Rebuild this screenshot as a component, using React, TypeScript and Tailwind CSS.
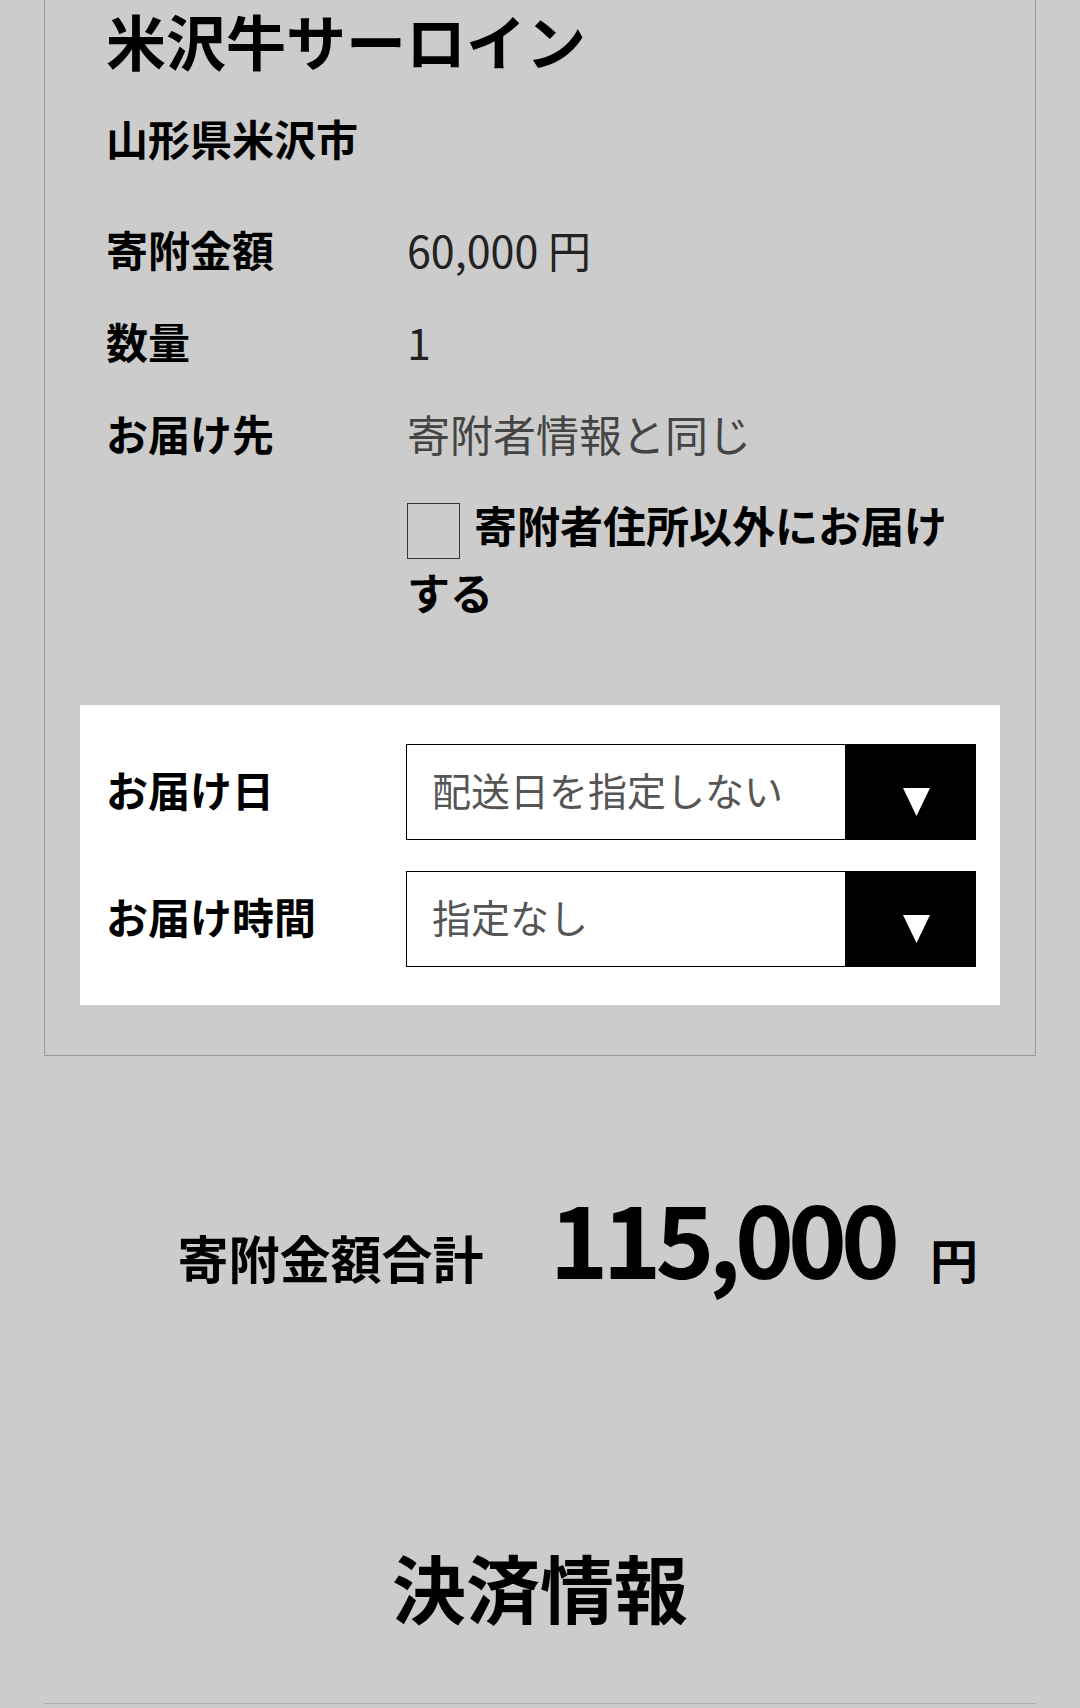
import React from "react";

const font = "font-['Noto_Sans_CJK_JP','Noto_Sans',sans-serif]";

function Select({ text }: { text: string }) {
  return (
    <div className="flex h-[96px] w-[570px]">
      <div className="flex flex-1 items-center border border-black bg-white pb-[6px] pl-[25px] text-[39px] leading-none text-[#555]">
        {text}
      </div>
      <div className="flex w-[130px] items-center justify-center bg-black">
        <svg width="27" height="28" viewBox="0 0 27 28" className="mt-[20px] ml-[10px]">
          <polygon points="0,0 27,0 13.5,28" fill="#fff" />
        </svg>
      </div>
    </div>
  );
}

export default function App() {
  return (
    <div className={`min-h-screen bg-[#cccccc] ${font} text-black`}>
      <div className="mx-[44px] border-x border-b border-[#999] px-[35px] pb-[50px]">
        <div className="pl-[26px] pr-[24px]">
          <div className="flex h-[80px] items-center text-[60px] font-bold leading-none">米沢牛サーロイン</div>
          <div className="mt-[30px] flex h-[56px] items-center text-[42px] font-bold leading-none">山形県米沢市</div>
          <div className="mt-[37px] grid grid-cols-[301px_1fr]">
            <div className="flex h-[92px] items-center text-[42px] font-bold leading-none">寄附金額</div>
            <div className="flex h-[92px] items-center text-[43px] leading-none text-[#222]">60,000 円</div>
            <div className="flex h-[92px] items-center text-[42px] font-bold leading-none">数量</div>
            <div className="flex h-[92px] items-center text-[43px] leading-none text-[#222]">1</div>
            <div className="flex h-[92px] items-center text-[42px] font-bold leading-none">お届け先</div>
            <div className="flex h-[92px] items-center text-[43px] leading-none text-[#444]">寄附者情報と同じ</div>
          </div>
          <div className="mt-[13px] grid grid-cols-[301px_1fr]">
            <div />
            <div className="text-[43px] font-bold leading-[65px]">
              <span className="mr-[14px] inline-block h-[56px] w-[53px] border border-[#333] align-middle" />
              寄附者住所以外にお届け
              <br />
              する
            </div>
          </div>
        </div>
        <div className="mt-[81px] bg-white pt-[39px] pb-[38px] pl-[26px] pr-[24px]">
          <div className="grid grid-cols-[300px_1fr] items-center gap-y-[31px]">
            <div className="pb-[6px] text-[42px] font-bold leading-none">お届け日</div>
            <Select text="配送日を指定しない" />
            <div className="pb-[6px] text-[42px] font-bold leading-none">お届け時間</div>
            <Select text="指定なし" />
          </div>
        </div>
      </div>

      <div className="mt-[130px] flex items-baseline justify-end pr-[102px]">
        <span className="text-[51px] font-bold leading-none">寄附金額合計</span>
        <span className="ml-[66px] text-[100px] font-bold leading-none tracking-[-6px]">115,000</span>
        <span className="ml-[36px] text-[48px] font-bold leading-none">円</span>
      </div>

      <div className="mt-[259px] flex h-[82px] items-center justify-center text-[74px] font-bold leading-none">
        決済情報
      </div>

      <div className="mx-[44px] mt-[76px] h-[40px] border-t border-[#aaa]" />
    </div>
  );
}
